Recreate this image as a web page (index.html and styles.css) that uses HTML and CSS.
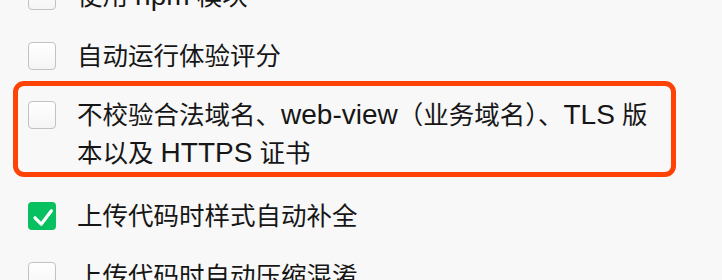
FILE: index.html
```html
<!DOCTYPE html>
<html lang="zh-CN">
<head>
<meta charset="utf-8">
<title>项目设置</title>
<link rel="stylesheet" href="styles.css">
</head>
<body>
<div class="list">
  <label class="row">
    <span class="box"></span>
    <span class="text">使用 <span class="latin">npm</span> 模块</span>
  </label>
  <label class="row">
    <span class="box"></span>
    <span class="text">自动运行体验评分</span>
  </label>
  <label class="row hl">
    <span class="box"></span>
    <span class="text">不校验合法域名、<span class="latin">web-view</span>（业务域名）、<span class="latin">TLS</span> 版本以及 <span class="latin">HTTPS</span> 证书</span>
  </label>
  <label class="row">
    <span class="box checked"><svg viewBox="0 0 28 28" width="28" height="28"><path d="M7 15.8 L13.2 22.2 L23.4 8.8" fill="none" stroke="#fff" stroke-width="3.2" stroke-linecap="round" stroke-linejoin="round"/></svg></span>
    <span class="text">上传代码时样式自动补全</span>
  </label>
  <label class="row">
    <span class="box"></span>
    <span class="text">上传代码时自动压缩混淆</span>
  </label>
</div>
</body>
</html>
```

FILE: styles.css
```css
html, body {
  margin: 0;
  padding: 0;
  background: #f8f8f8;
  overflow: hidden;
}

body {
  width: 722px;
  height: 280px;
  font-family: "Liberation Sans", "Noto Sans CJK SC", sans-serif;
  font-size: 25.5px;
  color: #161616;
}

.list {
  display: flex;
  flex-direction: column;
  padding-left: 28px;
  margin-top: -23px;
}

.row {
  display: flex;
  align-items: flex-start;
  gap: 21px;
  margin-bottom: 22px;
  line-height: 38px;
}

.row.hl {
  margin: -16px 46px 20px -15px;
  padding: 10px 4px 0 10px;
  border: 5px solid #ff4306;
  border-radius: 11px;
}

.box {
  flex: none;
  box-sizing: border-box;
  width: 28px;
  height: 28px;
  margin-top: 5px;
  border: 1px solid #c2c2c2;
  border-radius: 4px;
  background: linear-gradient(#ffffff, #f5f5f5);
}

.box.checked {
  border: none;
  background: #07c160;
}

.box svg {
  display: block;
}

.text {
  flex: 1;
  min-width: 0;
}

.latin {
  font-family: "Liberation Sans", sans-serif;
  font-size: 28px;
}
```
